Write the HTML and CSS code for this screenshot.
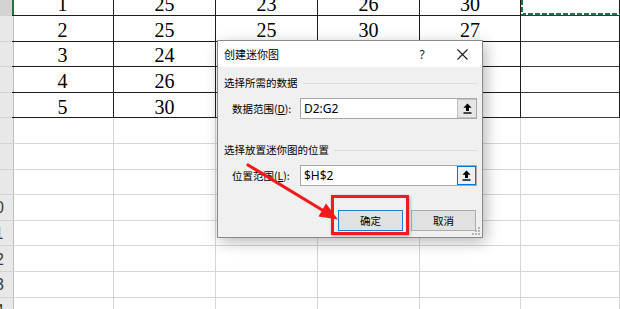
FILE: index.html
```html
<!DOCTYPE html>
<html lang="zh-CN">
<head>
<meta charset="utf-8">
<title>创建迷你图</title>
<link rel="stylesheet" href="styles.css">
</head>
<body>
<div class="sheet">
  <div class="heads">
    <div class="rh active"><span>2</span></div>
    <div class="rh"><span>3</span></div>
    <div class="rh"><span>4</span></div>
    <div class="rh"><span>5</span></div>
    <div class="rh"><span>6</span></div>
    <div class="rh"><span>7</span></div>
    <div class="rh"><span>8</span></div>
    <div class="rh"><span>9</span></div>
    <div class="rh"><span>10</span></div>
    <div class="rh"><span>11</span></div>
    <div class="rh"><span>12</span></div>
    <div class="rh"><span>13</span></div>
    <div class="rh"><span>14</span></div>
  </div>
  <div class="grid">
    <div class="c d">1</div><div class="c d">25</div><div class="c d">23</div><div class="c d">26</div><div class="c d">30</div><div class="c d last marquee"></div>
    <div class="c d">2</div><div class="c d">25</div><div class="c d">25</div><div class="c d">30</div><div class="c d">27</div><div class="c d last"></div>
    <div class="c d">3</div><div class="c d">24</div><div class="c d"></div><div class="c d"></div><div class="c d"></div><div class="c d last"></div>
    <div class="c d">4</div><div class="c d">26</div><div class="c d"></div><div class="c d"></div><div class="c d"></div><div class="c d last"></div>
    <div class="c d">5</div><div class="c d">30</div><div class="c d"></div><div class="c d"></div><div class="c d"></div><div class="c d last"></div>
    <div class="c"></div><div class="c"></div><div class="c"></div><div class="c"></div><div class="c"></div><div class="c"></div>
    <div class="c"></div><div class="c"></div><div class="c"></div><div class="c"></div><div class="c"></div><div class="c"></div>
    <div class="c"></div><div class="c"></div><div class="c"></div><div class="c"></div><div class="c"></div><div class="c"></div>
    <div class="c"></div><div class="c"></div><div class="c"></div><div class="c"></div><div class="c"></div><div class="c"></div>
    <div class="c"></div><div class="c"></div><div class="c"></div><div class="c"></div><div class="c"></div><div class="c"></div>
    <div class="c"></div><div class="c"></div><div class="c"></div><div class="c"></div><div class="c"></div><div class="c"></div>
    <div class="c"></div><div class="c"></div><div class="c"></div><div class="c"></div><div class="c"></div><div class="c"></div>
    <div class="c"></div><div class="c"></div><div class="c"></div><div class="c"></div><div class="c"></div><div class="c"></div>
  </div>
</div>

<div class="dialog">
  <div class="titlebar">
    <div class="title">创建迷你图</div>
    <div class="tb-btn help">?</div>
    <div class="tb-btn close">
      <svg width="11" height="11" viewBox="0 0 11 11"><path d="M0.5 0.5 L10.5 10.5 M10.5 0.5 L0.5 10.5" stroke="#1a1a1a" stroke-width="1.1" fill="none"/></svg>
    </div>
  </div>
  <div class="body">
    <div class="sec-head"><span>选择所需的数据</span><div class="sep"></div></div>
    <div class="field">
      <div class="flabel">数据范围(<u>D</u>):</div>
      <div class="input">
        <div class="val">D2:G2</div>
        <div class="pick">
          <svg width="9" height="11" viewBox="0 0 9 11"><path d="M4.5 0.5 L8.6 4.8 H6 V8 H3 V4.8 H0.4 Z" fill="#000"/><rect x="0.5" y="9.3" width="8" height="1.4" fill="#000"/></svg>
        </div>
      </div>
    </div>
    <div class="sec-head sec2"><span>选择放置迷你图的位置</span><div class="sep"></div></div>
    <div class="field">
      <div class="flabel">位置范围(<u>L</u>):</div>
      <div class="input">
        <div class="val">$H$2</div>
        <div class="pick focus">
          <svg width="9" height="11" viewBox="0 0 9 11"><path d="M4.5 0.5 L8.6 4.8 H6 V8 H3 V4.8 H0.4 Z" fill="#000"/><rect x="0.5" y="9.3" width="8" height="1.4" fill="#000"/></svg>
        </div>
      </div>
    </div>
    <div class="buttons">
      <div class="btn primary">确定</div>
      <div class="btn">取消</div>
    </div>
  </div>
  <svg class="grip" width="8" height="8" viewBox="0 0 8 8">
    <rect x="6" y="0" width="2" height="2" fill="#b4b4b4"/>
    <rect x="3" y="3" width="2" height="2" fill="#b4b4b4"/>
    <rect x="6" y="3" width="2" height="2" fill="#b4b4b4"/>
    <rect x="0" y="6" width="2" height="2" fill="#b4b4b4"/>
    <rect x="3" y="6" width="2" height="2" fill="#b4b4b4"/>
    <rect x="6" y="6" width="2" height="2" fill="#b4b4b4"/>
  </svg>
</div>

<div class="highlight"></div>
<svg class="arrow" width="620" height="309" viewBox="0 0 620 309">
  <line x1="248" y1="165" x2="323" y2="210.5" stroke="#f21b1b" stroke-width="3.2" stroke-linecap="round"/>
  <polygon points="338,219.5 318.5,216.5 326,203.5" fill="#f21b1b"/>
</svg>
</body>
</html>
```

FILE: styles.css
```css
html, body {
  margin: 0;
  padding: 0;
}
body {
  width: 620px;
  height: 309px;
  overflow: hidden;
  background: #ffffff;
  position: relative;
}

.sheet {
  display: flex;
  margin-top: -9.6px;
}

.heads {
  width: 12px;
  display: grid;
  grid-auto-rows: 25.6px;
  flex-shrink: 0;
}
.rh {
  box-sizing: border-box;
  background: #e8e8e8;
  border-right: 1px solid #bdbdbd;
  border-bottom: 1px solid #d2d2d2;
  display: flex;
  align-items: center;
  font-family: "Liberation Sans", sans-serif;
  font-size: 16px;
  color: #3a3a3a;
}
.rh span {
  flex-shrink: 0;
  width: 34px;
  margin-left: -22px;
  text-align: center;
  padding-top: 2px;
}
.rh.active {
  background: #d3d3d3;
  border-right: 2px solid #217346;
}

.grid {
  flex: 1;
  display: grid;
  grid-template-columns: 102px 102px 102px 102px 101px 1fr;
  grid-auto-rows: 25.6px;
}
.c {
  box-sizing: border-box;
  border-right: 1px solid #d6d6d6;
  border-bottom: 1px solid #d6d6d6;
  display: flex;
  align-items: center;
  justify-content: center;
  font-family: "Liberation Serif", serif;
  font-size: 20px;
  color: #000;
  padding-top: 4px;
}
.c.d {
  border-right-color: #1c1c1c;
  border-bottom-color: #1c1c1c;
}
.c.d.last {
  border-bottom-color: #3a3a3a;
}
.marquee {
  position: relative;
}
.marquee::after {
  content: "";
  position: absolute;
  left: 0;
  top: -4px;
  right: -4px;
  bottom: 0;
  background:
    repeating-linear-gradient(to bottom, #217346 0 5px, #ffffff 5px 7px) left top / 2px 100% no-repeat,
    repeating-linear-gradient(to right, #217346 0 5px, #ffffff 5px 7px) left bottom / 100% 2px no-repeat;
}

/* dialog */
.dialog {
  position: absolute;
  left: 217px;
  top: 40px;
  width: 266px;
  height: 198px;
  box-sizing: border-box;
  border: 1px solid #8a8a8a;
  background: #f0f0f0;
  box-shadow: 3px 4px 14px rgba(0, 0, 0, 0.28);
  display: flex;
  flex-direction: column;
  font-family: "Noto Sans CJK SC", "Noto Sans", sans-serif;
  font-size: 10.5px;
  color: #000;
}
.titlebar {
  height: 26px;
  flex-shrink: 0;
  background: #ffffff;
  display: flex;
  align-items: center;
  padding-left: 6px;
  font-size: 11px;
}
.title {
  flex: 1;
}
.tb-btn {
  width: 40px;
  height: 100%;
  display: flex;
  align-items: center;
  justify-content: center;
}
.help {
  font-family: "Noto Sans", sans-serif;
  font-size: 12px;
  color: #222;
}
.body {
  flex: 1;
  padding: 9px 5px 0 6px;
}
.sec-head {
  display: flex;
  align-items: center;
  height: 14px;
  line-height: 14px;
}
.sec-head.sec2 {
  margin-top: 24px;
}
.sep {
  flex: 1;
  height: 1px;
  background: #dcdcdc;
  margin-left: 5px;
}
.field {
  display: flex;
  align-items: center;
  margin-top: 8px;
  height: 21px;
}
.flabel {
  width: 76px;
  flex-shrink: 0;
  box-sizing: border-box;
  padding-left: 8px;
}
.flabel u {
  text-underline-offset: 1px;
}
.input {
  flex: 1;
  height: 21px;
  box-sizing: border-box;
  border: 1px solid #a8a8a8;
  background: #ffffff;
  display: flex;
  align-items: stretch;
}
.val {
  flex: 1;
  padding-left: 3px;
  display: flex;
  align-items: center;
  font-family: "Noto Sans", sans-serif;
  font-size: 12px;
}
.pick {
  width: 19px;
  box-sizing: border-box;
  border: 1px solid #c4c4c4;
  border-right-width: 0;
  background: #e6e6e6;
  display: flex;
  align-items: center;
  justify-content: center;
}
.pick.focus {
  border: 1px solid #0078d7;
  background: #e9f1fa;
}
.buttons {
  display: flex;
  justify-content: flex-end;
  gap: 8px;
  margin-top: 24px;
  padding-right: 1px;
}
.btn {
  width: 65px;
  height: 21px;
  box-sizing: border-box;
  border: 1px solid #adadad;
  background: #e1e1e1;
  display: flex;
  align-items: center;
  justify-content: center;
}
.btn.primary {
  border-color: #1b7fd6;
}
.grip {
  position: absolute;
  right: 2px;
  bottom: 2px;
}

/* annotation overlays */
.highlight {
  position: absolute;
  left: 331px;
  top: 195px;
  width: 78px;
  height: 40px;
  box-sizing: border-box;
  border: 3px solid #f21b1b;
  box-shadow: 1px 1px 3px rgba(0, 0, 0, 0.3);
}
.arrow {
  position: absolute;
  left: 0;
  top: 0;
  pointer-events: none;
}
```
